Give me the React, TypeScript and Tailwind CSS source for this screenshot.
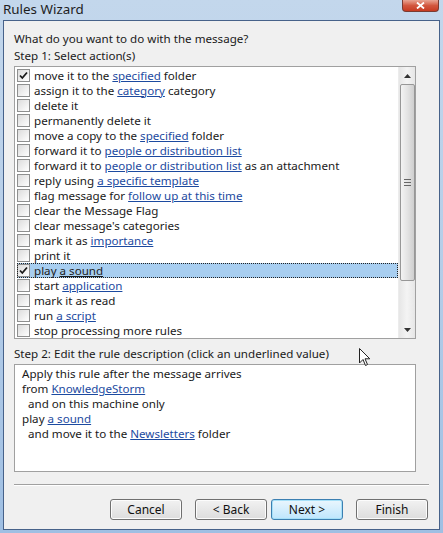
import React from "react";

type Part = { t: string; link?: boolean };

const rows: { parts: Part[]; checked?: boolean; selected?: boolean }[] = [
  { parts: [{ t: "move it to the " }, { t: "specified", link: true }, { t: " folder" }], checked: true },
  { parts: [{ t: "assign it to the " }, { t: "category", link: true }, { t: " category" }] },
  { parts: [{ t: "delete it" }] },
  { parts: [{ t: "permanently delete it" }] },
  { parts: [{ t: "move a copy to the " }, { t: "specified", link: true }, { t: " folder" }] },
  { parts: [{ t: "forward it to " }, { t: "people or distribution list", link: true }] },
  { parts: [{ t: "forward it to " }, { t: "people or distribution list", link: true }, { t: " as an attachment" }] },
  { parts: [{ t: "reply using " }, { t: "a specific template", link: true }] },
  { parts: [{ t: "flag message for " }, { t: "follow up at this time", link: true }] },
  { parts: [{ t: "clear the Message Flag" }] },
  { parts: [{ t: "clear message's categories" }] },
  { parts: [{ t: "mark it as " }, { t: "importance", link: true }] },
  { parts: [{ t: "print it" }] },
  { parts: [{ t: "play " }, { t: "a sound", link: true }], checked: true, selected: true },
  { parts: [{ t: "start " }, { t: "application", link: true }] },
  { parts: [{ t: "mark it as read" }] },
  { parts: [{ t: "run " }, { t: "a script", link: true }] },
  { parts: [{ t: "stop processing more rules" }] },
];

const Link = ({ children, dark }: { children: React.ReactNode; dark?: boolean }) => (
  <span className={dark ? "underline text-[#1c1c1c]" : "underline text-[#1c4aa0]"}>{children}</span>
);

const CheckBox = ({ checked }: { checked?: boolean }) => (
  <span className="w-[13px] h-[13px] border border-[#8e8f8f] bg-gradient-to-br from-[#dcdcdc] to-white flex items-center justify-center shrink-0">
    {checked && (
      <svg width="9" height="9" viewBox="0 0 9 9">
        <path d="M1 4.5 L3.3 7 L8 1.5" stroke="#1a1a1a" strokeWidth="1.8" fill="none" />
      </svg>
    )}
  </span>
);

const Btn = ({ label, active }: { label: string; active?: boolean }) => (
  <button
    className={
      "w-[72px] h-[21px] rounded-[3px] border text-[12px] text-[#111] flex items-center justify-center leading-[14px] " +
      (active
        ? "border-[#3c7fb1] bg-gradient-to-b from-[#eaf6fd] to-[#bee6fd] shadow-[inset_0_0_0_1px_#a6e0f8]"
        : "border-[#707070] bg-gradient-to-b from-[#f2f2f2] to-[#dddddd] shadow-[inset_0_0_0_1px_#fcfcfc]")
    }
  >
    {label}
  </button>
);

export default function App() {
  return (
    <div
      className="w-[443px] h-[533px] overflow-hidden flex flex-col bg-gradient-to-b from-[#c3d7ec] via-[#b5cde8] to-[#9fbfe3] text-[11.6px] text-[#1a1a1a]"
      style={{ fontFamily: "'Noto Sans', 'DejaVu Sans', sans-serif" }}
    >
      {/* title bar */}
      <div className="h-[20px] flex items-start justify-between shrink-0">
        <span className="pl-[3px] pt-[1px] text-[13.4px] text-[#1e1e1e] leading-[16px]">Rules Wizard</span>
        <div className="mr-[4px] w-[37px] h-[12px] rounded-b-[4px] border border-t-0 border-[#7a3b32] bg-gradient-to-b from-[#e8a493] via-[#d2573f] to-[#c73a20] flex items-center justify-center">
          <svg width="9" height="7" viewBox="0 0 9 7">
            <path d="M1 0.5 L8 6.5 M8 0.5 L1 6.5" stroke="white" strokeWidth="1.8" />
          </svg>
        </div>
      </div>

      {/* body */}
      <div className="mx-[3px] flex-1 mb-[3px] border border-[#47628a] bg-[#f0f0f0] flex flex-col px-[10px]">
        <div className="pt-[10px] leading-[16px]">What do you want to do with the message?</div>
        <div className="leading-[16px] mt-[1px]">Step 1: Select action(s)</div>

        {/* action list */}
        <div className="mt-[2px] w-[402px] h-[273px] border border-[#a0a0a0] bg-white flex">
          <div className="flex-1 pt-[1px] pl-[2px] overflow-hidden">
            {rows.map((r, i) => (
              <div
                key={i}
                className={
                  "h-[15px] flex items-center gap-[4px] " +
                  (r.selected ? "bg-[#a8cef0] outline outline-1 outline-dotted outline-[#222] -outline-offset-1" : "")
                }
              >
                <CheckBox checked={r.checked} />
                <span className="whitespace-nowrap leading-[14px]">
                  {r.parts.map((p, j) =>
                    p.link ? (
                      <Link key={j} dark={r.selected}>{p.t}</Link>
                    ) : (
                      <span key={j}>{p.t.replace(/ /g, "\u00a0")}</span>
                    )
                  )}
                </span>
              </div>
            ))}
          </div>
          {/* scrollbar */}
          <div className="w-[17px] bg-gradient-to-r from-[#e6e6e6] via-[#f4f4f4] to-[#e6e6e6] flex flex-col items-center border-l border-[#ececec]">
            <div className="h-[17px] w-full flex items-center justify-center">
              <svg width="7" height="4" viewBox="0 0 7 4">
                <path d="M0 4 L3.5 0 L7 4 Z" fill="#333" />
              </svg>
            </div>
            <div className="w-[15px] h-[197px] rounded-[2px] border border-[#979797] bg-gradient-to-r from-[#f3f3f3] via-[#e3e3e3] to-[#cfcfcf] flex flex-col items-center justify-center gap-[2px]">
              <span className="w-[7px] h-[1px] bg-[#666]" />
              <span className="w-[7px] h-[1px] bg-[#666]" />
              <span className="w-[7px] h-[1px] bg-[#666]" />
            </div>
            <div className="flex-1" />
            <div className="h-[17px] w-full flex items-center justify-center">
              <svg width="7" height="4" viewBox="0 0 7 4">
                <path d="M0 0 L7 0 L3.5 4 Z" fill="#333" />
              </svg>
            </div>
          </div>
        </div>

        <div className="mt-[7px] leading-[16px] relative">
          Step 2: Edit the rule description (click an underlined value)
          <svg className="absolute left-[345px] top-[2px]" width="12" height="19" viewBox="0 0 12 19">
            <path d="M0.5 0.5 L0.5 15 L4 11.5 L6.5 17.5 L8.5 16.5 L6 10.8 L10.8 10.8 Z" fill="white" stroke="#222" strokeWidth="1" />
          </svg>
        </div>

        {/* description box */}
        <div className="mt-[2px] w-[402px] h-[108px] border border-[#a0a0a0] bg-white pl-[7px] pt-[1px] leading-[15px]">
          <div>Apply this rule after the message arrives</div>
          <div>
            from <Link>KnowledgeStorm</Link>
          </div>
          <div className="pl-[6px]">and on this machine only</div>
          <div>
            play <Link>a sound</Link>
          </div>
          <div className="pl-[6px]">
            and move it to the <Link>Newsletters</Link> folder
          </div>
        </div>

        <div className="mt-[12px] h-[2px] border-t border-[#a0a0a0] border-b-white border-b" />

        <div className="mt-[13px] flex justify-end pr-[1px]">
          <Btn label="Cancel" />
          <div className="w-[13px]" />
          <Btn label="< Back" />
          <div className="w-[4px]" />
          <Btn label="Next >" active />
          <div className="w-[13px]" />
          <Btn label="Finish" />
        </div>
      </div>
    </div>
  );
}
